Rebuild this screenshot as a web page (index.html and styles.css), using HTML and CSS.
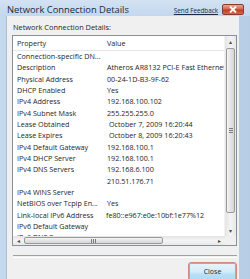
FILE: index.html
```html
<!DOCTYPE html>
<html>
<head>
<meta charset="utf-8">
<link rel="stylesheet" href="styles.css">
</head>
<body>
<div class="window">
  <div class="titlebar">
    <span class="title">Network Connection Details</span>
    <span class="feedback">Send Feedback</span>
    <span class="xbtn"><svg width="10" height="7" viewBox="0 0 10 7"><path d="M2 0.5 L8 6.5 M8 0.5 L2 6.5" stroke="#fff" stroke-width="1.8"/></svg></span>
  </div>
  <div class="client">
    <div class="label">Network Connection Details:</div>
    <div class="listbox">
      <div class="view">
        <div class="list">
          <div class="header"><span class="c1">Property</span><span class="c2">Value</span></div>
          <div class="row"><span class="c1">Connection-specific DN...</span><span class="c2"></span></div>
          <div class="row"><span class="c1">Description</span><span class="c2">Atheros AR8132 PCI-E Fast Ethernet Controller</span></div>
          <div class="row"><span class="c1">Physical Address</span><span class="c2">00-24-1D-B3-9F-62</span></div>
          <div class="row"><span class="c1">DHCP Enabled</span><span class="c2">Yes</span></div>
          <div class="row"><span class="c1">IPv4 Address</span><span class="c2">192.168.100.102</span></div>
          <div class="row"><span class="c1">IPv4 Subnet Mask</span><span class="c2">255.255.255.0</span></div>
          <div class="row"><span class="c1">Lease Obtained</span><span class="c2 ind">October 7, 2009 16:20:44</span></div>
          <div class="row"><span class="c1">Lease Expires</span><span class="c2 ind">October 8, 2009 16:20:43</span></div>
          <div class="row"><span class="c1">IPv4 Default Gateway</span><span class="c2">192.168.100.1</span></div>
          <div class="row"><span class="c1">IPv4 DHCP Server</span><span class="c2">192.168.100.1</span></div>
          <div class="row"><span class="c1">IPv4 DNS Servers</span><span class="c2">192.168.6.100</span></div>
          <div class="row"><span class="c1"></span><span class="c2">210.51.176.71</span></div>
          <div class="row"><span class="c1">IPv4 WINS Server</span><span class="c2"></span></div>
          <div class="row"><span class="c1">NetBIOS over Tcpip En...</span><span class="c2">Yes</span></div>
          <div class="row"><span class="c1">Link-local IPv6 Address</span><span class="c2 neg">fe80::e967:e0e:10bf:1e77%12</span></div>
          <div class="row"><span class="c1">IPv6 Default Gateway</span><span class="c2"></span></div>
          <div class="row"><span class="c1">IPv6 DNS Server</span><span class="c2"></span></div>
        </div>
        <div class="vscroll">
          <div class="arrow">&#9652;</div>
          <div class="vtrack"><div class="vthumb"><span class="grip"></span></div></div>
          <div class="arrow">&#9662;</div>
        </div>
      </div>
      <div class="hbar">
        <div class="hscroll">
          <div class="harrow">&#9666;</div>
          <div class="htrack"><div class="hthumb"><span class="hgrip"></span></div></div>
          <div class="harrow">&#9656;</div>
        </div>
        <div class="corner"></div>
      </div>
    </div>
    <div class="sep"></div>
    <div class="buttons"><div class="closebtn">Close</div></div>
  </div>
</div>
</body>
</html>
```

FILE: styles.css
```css
html, body {
  margin: 0;
  padding: 0;
  width: 250px;
  height: 279px;
  overflow: hidden;
}
body {
  font-family: "Open Sans", "Noto Sans", sans-serif;
  color: #1e1e1e;
  background: #bfd4ea;
}
.window {
  display: flex;
  flex-direction: column;
  height: 279px;
  background: linear-gradient(90deg, #c4d8ee 0%, #bfd3ea 60%, #b7cde6 100%);
}
.titlebar {
  height: 20px;
  display: flex;
  align-items: center;
  padding-left: 7px;
  background: linear-gradient(180deg, #d3e2f3 0%, #c3d7ee 100%);
}
.title {
  font-size: 9.4px;
  color: #1a2a3a;
  flex: 1;
  margin-top: 3px;
}
.feedback {
  font-size: 6.3px;
  color: #1c2c4a;
  text-decoration: underline;
  margin-top: 4px;
  margin-right: 4px;
}
.xbtn {
  width: 22px;
  height: 11px;
  margin-right: 6px;
  margin-top: 3px;
  border: 1px solid #8a3a30;
  border-radius: 2px;
  background: linear-gradient(180deg, #e8a595 0%, #d46a52 45%, #c23a22 55%, #d86a4a 100%);
  display: flex;
  align-items: center;
  justify-content: center;
  box-sizing: border-box;
}
.client {
  flex: 1;
  margin-left: 6px;
  width: 233px;
  background: #f0f0f0;
  border-left: 1px solid #a9bcd2;
  box-sizing: border-box;
  display: flex;
  flex-direction: column;
  padding: 0 2px 0 5px;
}
.label {
  font-size: 7.4px;
  height: 19px;
  line-height: 22px;
  padding-left: 1px;
}
.listbox {
  height: 211px;
  border: 1px solid #8a9099;
  background: #fff;
  display: flex;
  flex-direction: column;
  box-sizing: border-box;
}
.view {
  display: flex;
  height: 200px;
}
.list {
  flex: 1;
  overflow: hidden;
  font-size: 7.2px;
}
.header {
  height: 15px;
  display: flex;
  align-items: center;
  border-bottom: 1px solid #e3e7ec;
  box-sizing: border-box;
}
.row {
  height: 11.33px;
  line-height: 11.33px;
  display: flex;
  white-space: nowrap;
}
.c1 {
  width: 90px;
  padding-left: 4px;
  flex: none;
  overflow: hidden;
}
.c2 {
  flex: none;
  white-space: nowrap;
}
.ind { padding-left: 2px; }
.neg { margin-left: -1px; }
.vscroll {
  width: 11px;
  display: flex;
  flex-direction: column;
  background: linear-gradient(90deg, #e4e4e4, #f4f4f4 50%, #e8e8e8);
  border-left: 1px solid #f2f2f2;
}
.arrow, .harrow {
  font-size: 6px;
  color: #4a4a4a;
  display: flex;
  align-items: center;
  justify-content: center;
}
.arrow { height: 11px; }
.vtrack {
  flex: 1;
  padding: 1px 1px;
}
.vthumb {
  height: 165px;
  border: 1px solid #9a9a9a;
  border-radius: 2px;
  background: linear-gradient(90deg, #f4f4f4, #e4e4e4 50%, #d6d6d6);
  display: flex;
  align-items: center;
  justify-content: center;
  box-sizing: border-box;
}
.grip {
  width: 4px;
  height: 5px;
  background: repeating-linear-gradient(180deg, #7a7a7a 0 1px, transparent 1px 2px);
}
.hbar {
  display: flex;
  height: 9px;
}
.hscroll {
  flex: 1;
  display: flex;
  background: linear-gradient(180deg, #e4e4e4, #f4f4f4 50%, #e8e8e8);
}
.harrow { width: 11px; }
.htrack {
  flex: 1;
  padding: 1px 0;
}
.hthumb {
  width: 139px;
  height: 100%;
  border: 1px solid #9a9a9a;
  border-radius: 2px;
  background: linear-gradient(180deg, #f4f4f4, #e4e4e4 50%, #d6d6d6);
  display: flex;
  align-items: center;
  justify-content: center;
  box-sizing: border-box;
}
.hgrip {
  width: 5px;
  height: 4px;
  background: repeating-linear-gradient(90deg, #7a7a7a 0 1px, transparent 1px 2px);
}
.corner {
  width: 11px;
  background: #f0f0f0;
}
.sep {
  margin-top: 9px;
  height: 1px;
  border-top: 1px solid #a0a0a0;
  border-bottom: 1px solid #fff;
  margin-left: 1px;
}
.buttons {
  display: flex;
  justify-content: flex-end;
  padding-top: 4px;
  padding-right: 0px;
}
.closebtn {
  width: 49px;
  height: 22px;
  box-sizing: border-box;
  border: 1px solid #d28a80;
  border-radius: 3px;
  box-shadow: inset 0 0 0 1px #7fb8d8;
  background: linear-gradient(180deg, #e6f4fc 0%, #d4ecfa 45%, #b8e0f6 55%, #a8d8f2 100%);
  font-size: 7px;
  text-align: center;
  line-height: 18px;
}
```
